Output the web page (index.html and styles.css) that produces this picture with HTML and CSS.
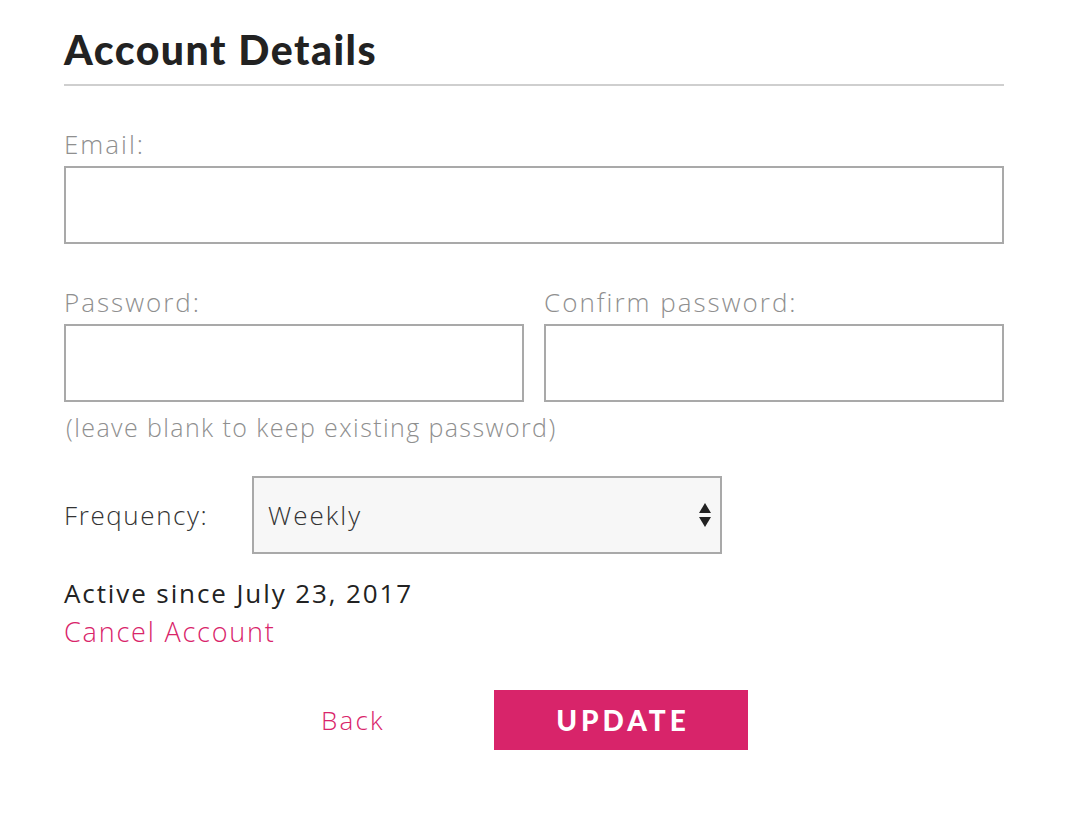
FILE: index.html
```html
<!DOCTYPE html>
<html lang="en">
<head>
    <meta charset="UTF-8">
    <meta name="viewport" content="width=device-width, initial-scale=1.0">
    <title>Account Details</title>
    <link rel="stylesheet" href="styles.css">
</head>
<body>
    <form class="account-form">
        <h1 class="page-title">Account Details</h1>

        <div class="field">
            <label for="email">Email:</label>
            <input type="text" id="email" name="email">
        </div>

        <div class="field-row">
            <div class="field">
                <label for="password">Password:</label>
                <input type="password" id="password" name="password">
            </div>
            <div class="field">
                <label for="confirm">Confirm password:</label>
                <input type="password" id="confirm" name="confirm">
            </div>
        </div>
        <p class="hint">(leave blank to keep existing password)</p>

        <div class="frequency">
            <label for="frequency">Frequency:</label>
            <div class="select-box">
                <span class="select-value">Weekly</span>
                <svg class="select-arrows" width="14" height="26" viewBox="0 0 14 26">
                    <path d="M7 1 L13 11 L1 11 Z" fill="#222"/>
                    <path d="M1 15 L13 15 L7 25 Z" fill="#222"/>
                </svg>
            </div>
        </div>

        <p class="active-since">Active since July 23, 2017</p>
        <a class="cancel-link" href="#">Cancel Account</a>

        <div class="actions">
            <a class="back-link" href="#">Back</a>
            <button type="button" class="update-btn">UPDATE</button>
        </div>
    </form>
</body>
</html>
```

FILE: styles.css
```css
body {
    margin: 0;
    padding: 0;
    background-color: #fff;
    font-family: 'Open Sans', sans-serif;
}

.account-form {
    width: 940px;
    margin: 0 0 0 64px;
    padding-top: 26px;
}

.page-title {
    margin: 0;
    font-family: 'Lato', sans-serif;
    font-size: 41px;
    font-weight: 900;
    line-height: 48px;
    letter-spacing: 1.5px;
    color: #222;
    padding-bottom: 10px;
    border-bottom: 2px solid #cfcfcf;
}

.field label {
    display: block;
    font-size: 26px;
    font-weight: 300;
    line-height: 30px;
    color: #8f8f8f;
    margin-bottom: 7px;
    letter-spacing: 2px;
}

.field input {
    display: block;
    width: 100%;
    height: 78px;
    box-sizing: border-box;
    border: 2px solid #a9a9a9;
    background: #fff;
    margin: 0;
    padding: 0 14px;
    font-size: 24px;
}

.account-form > .field {
    margin-top: 43px;
}

.field-row {
    display: flex;
    gap: 20px;
    margin-top: 43px;
}

.field-row .field {
    flex: 1;
}

.hint {
    margin: 10px 0 0 2px;
    font-size: 25px;
    font-weight: 300;
    line-height: 30px;
    color: #8f8f8f;
    letter-spacing: 1.4px;
}

.frequency {
    display: flex;
    align-items: center;
    margin-top: 34px;
}

.frequency label {
    width: 188px;
    font-size: 26px;
    font-weight: 300;
    color: #333;
    letter-spacing: 1.6px;
}

.select-box {
    width: 470px;
    height: 78px;
    box-sizing: border-box;
    border: 2px solid #a9a9a9;
    background: #f7f7f7;
    display: flex;
    align-items: center;
    justify-content: space-between;
    padding: 0 8px 0 14px;
}

.select-value {
    font-size: 26px;
    font-weight: 300;
    color: #333;
    letter-spacing: 2px;
}

.active-since {
    margin: 22px 0 0;
    font-size: 26px;
    font-weight: 400;
    line-height: 34px;
    color: #222;
    letter-spacing: 1.9px;
}

.cancel-link {
    display: inline-block;
    font-size: 27px;
    font-weight: 300;
    line-height: 34px;
    margin-top: 5px;
    color: #d9246a;
    text-decoration: none;
    letter-spacing: 1.8px;
}

.actions {
    display: flex;
    align-items: center;
    margin-top: 41px;
}

.back-link {
    margin-left: 257px;
    width: 173px;
    font-size: 26px;
    font-weight: 300;
    color: #d9246a;
    text-decoration: none;
    letter-spacing: 2.2px;
}

.update-btn {
    width: 254px;
    height: 60px;
    border: none;
    padding: 0 0 0 4px;
    background-color: #d8246a;
    color: #fff;
    font-family: 'Lato', sans-serif;
    font-size: 28px;
    font-weight: 900;
    letter-spacing: 4px;
    cursor: pointer;
}
```
